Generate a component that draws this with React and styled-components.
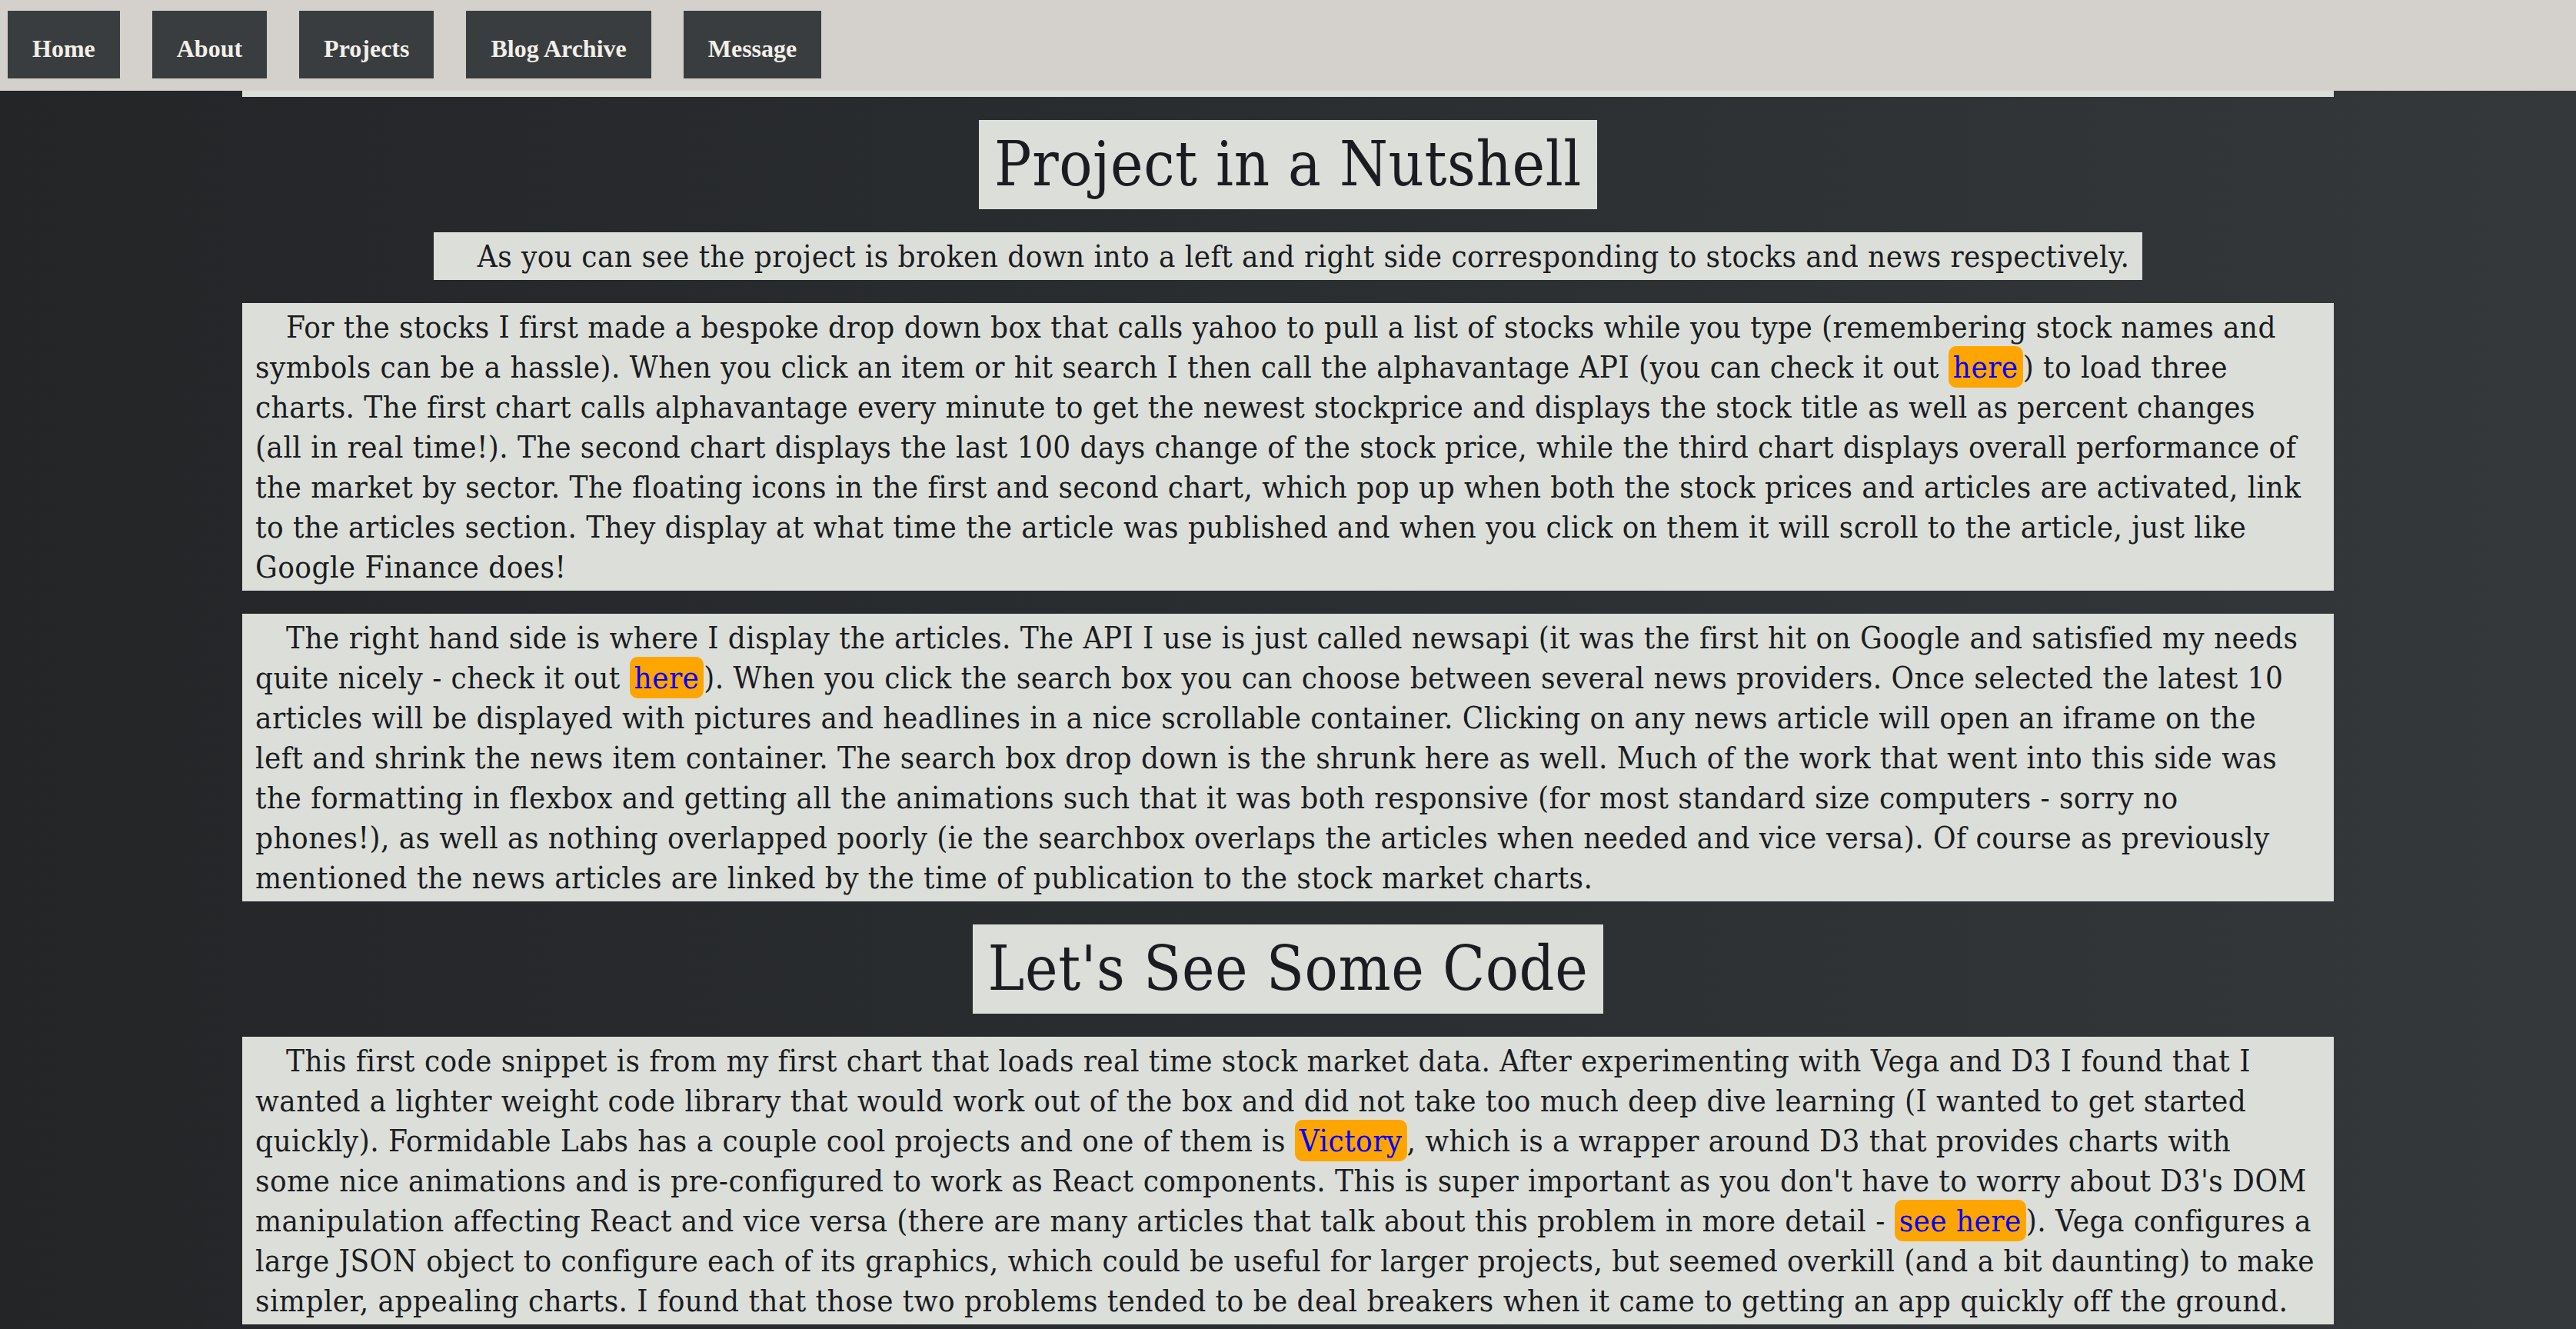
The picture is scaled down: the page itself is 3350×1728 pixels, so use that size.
import React from 'react';
import styled, { createGlobalStyle } from 'styled-components';

const GlobalStyle = createGlobalStyle`
  html, body {
    margin: 0;
    padding: 0;
  }
  body {
    min-height: 100vh;
    background: linear-gradient(to right, #232527 0%, #2a2d30 45%, #35383b 100%);
    font-family: "DejaVu Serif Condensed", "DejaVu Serif", serif;
  }
`;

const NavBar = styled.nav`
  position: fixed;
  top: 0;
  left: 0;
  right: 0;
  height: 118px;
  box-sizing: border-box;
  padding: 14px 10px 0;
  display: flex;
  align-items: flex-start;
  gap: 42px;
  background: #d4d1cc;
  z-index: 10;
`;

const NavButton = styled.a`
  height: 88px;
  box-sizing: border-box;
  padding: 10px 32px 0;
  display: flex;
  align-items: center;
  background: #393d40;
  color: #f2efe8;
  font-family: "Liberation Serif", "Times New Roman", serif;
  font-weight: bold;
  font-size: 32px;
  text-decoration: none;
  white-space: nowrap;
`;

const Main = styled.main`
  width: 2720px;
  margin: 0 auto;
  padding: 26px 0 40px;
  display: flex;
  flex-direction: column;
  align-items: center;
  gap: 30px;
`;

const Shot = styled.div`
  align-self: stretch;
  height: 100px;
  background: #dcdfd9;
`;

const Heading = styled.h1`
  margin: 0;
  padding: 5px 20px;
  background: #dcdfd9;
  color: #1b1c21;
  font-weight: normal;
  font-size: 80px;
  line-height: 106px;
  letter-spacing: 0.6px;
  font-stretch: condensed;
  white-space: nowrap;
`;

const Block = styled.p`
  margin: 0;
  align-self: ${p => (p.$fit ? 'center' : 'stretch')};
  padding: 5px 17px;
  background: #dcdfd9;
  color: #1b1c21;
  font-size: 40px;
  line-height: 52px;
  letter-spacing: 0.45px;
  font-stretch: condensed;
  text-indent: 40px;
  white-space: nowrap;
`;

const Link = styled.a`
  padding: 4px 6px;
  border-radius: 10px;
  background: #ffa500;
  color: #0000ff;
  text-decoration: none;
`;

const Lines = ({ lines }) =>
  lines.map((line, i) => (
    <React.Fragment key={i}>
      {line}
      {i < lines.length - 1 && <br />}
    </React.Fragment>
  ));

const stocks = [
  'For the stocks I first made a bespoke drop down box that calls yahoo to pull a list of stocks while you type (remembering stock names and',
  <>symbols can be a hassle). When you click an item or hit search I then call the alphavantage API (you can check it out <Link href="#">here</Link>) to load three</>,
  'charts. The first chart calls alphavantage every minute to get the newest stockprice and displays the stock title as well as percent changes',
  '(all in real time!). The second chart displays the last 100 days change of the stock price, while the third chart displays overall performance of',
  'the market by sector. The floating icons in the first and second chart, which pop up when both the stock prices and articles are activated, link',
  'to the articles section. They display at what time the article was published and when you click on them it will scroll to the article, just like',
  'Google Finance does!',
];

const news = [
  'The right hand side is where I display the articles. The API I use is just called newsapi (it was the first hit on Google and satisfied my needs',
  <>quite nicely - check it out <Link href="#">here</Link>). When you click the search box you can choose between several news providers. Once selected the latest 10</>,
  'articles will be displayed with pictures and headlines in a nice scrollable container. Clicking on any news article will open an iframe on the',
  'left and shrink the news item container. The search box drop down is the shrunk here as well. Much of the work that went into this side was',
  'the formatting in flexbox and getting all the animations such that it was both responsive (for most standard size computers - sorry no',
  'phones!), as well as nothing overlapped poorly (ie the searchbox overlaps the articles when needed and vice versa). Of course as previously',
  'mentioned the news articles are linked by the time of publication to the stock market charts.',
];

const code = [
  'This first code snippet is from my first chart that loads real time stock market data. After experimenting with Vega and D3 I found that I',
  'wanted a lighter weight code library that would work out of the box and did not take too much deep dive learning (I wanted to get started',
  <>quickly). Formidable Labs has a couple cool projects and one of them is <Link href="#">Victory</Link>, which is a wrapper around D3 that provides charts with</>,
  "some nice animations and is pre-configured to work as React components. This is super important as you don't have to worry about D3's DOM",
  <>manipulation affecting React and vice versa (there are many articles that talk about this problem in more detail - <Link href="#">see here</Link>). Vega configures a</>,
  'large JSON object to configure each of its graphics, which could be useful for larger projects, but seemed overkill (and a bit daunting) to make',
  'simpler, appealing charts. I found that those two problems tended to be deal breakers when it came to getting an app quickly off the ground.',
];

export default function App() {
  return (
    <>
      <GlobalStyle />
      <NavBar>
        {['Home', 'About', 'Projects', 'Blog Archive', 'Message'].map(item => (
          <NavButton key={item} href="#">{item}</NavButton>
        ))}
      </NavBar>
      <Main>
        <Shot />
        <Heading>Project in a Nutshell</Heading>
        <Block $fit>
          As you can see the project is broken down into a left and right side corresponding to stocks and news respectively.
        </Block>
        <Block><Lines lines={stocks} /></Block>
        <Block><Lines lines={news} /></Block>
        <Heading>Let's See Some Code</Heading>
        <Block><Lines lines={code} /></Block>
      </Main>
    </>
  );
}
